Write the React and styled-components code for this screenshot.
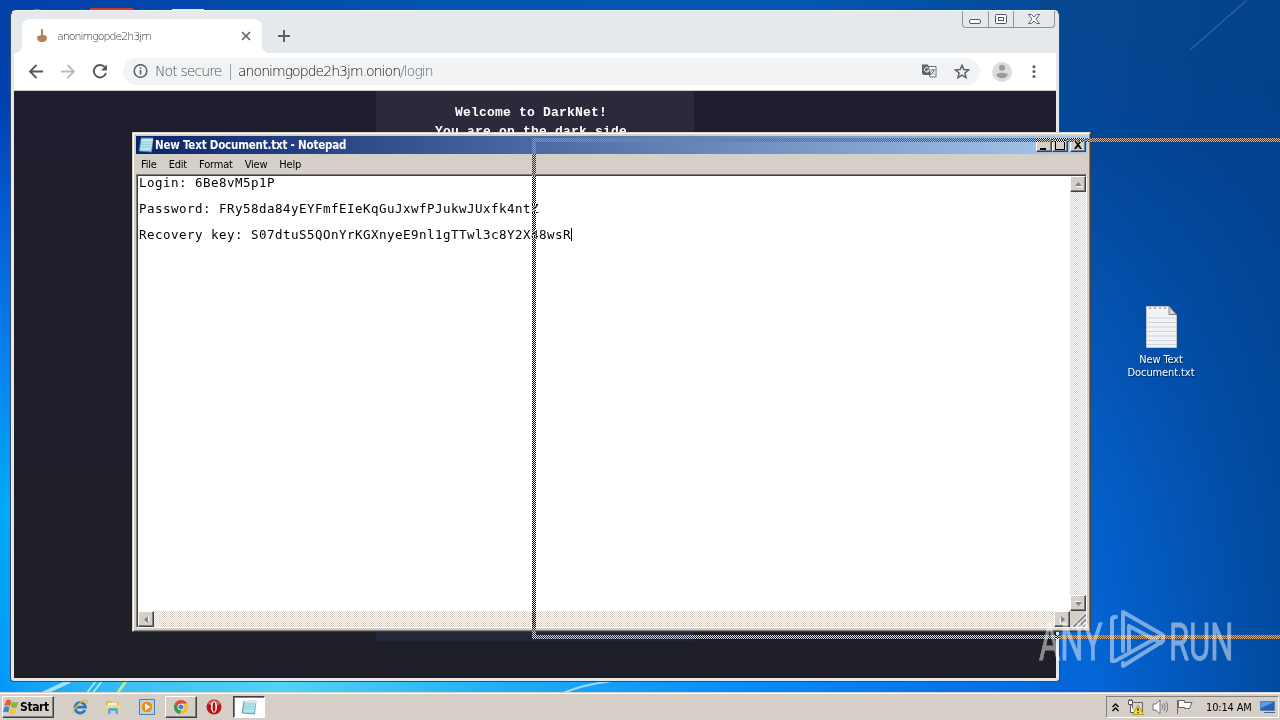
import React from "react";
import styled, { createGlobalStyle, css } from "styled-components";

const GlobalStyle = createGlobalStyle`
* {
    box-sizing: border-box;
}
body {
    margin: 0;
    overflow: hidden;
}
svg {
    display: block;
    flex: none;
}
`;

const uiFont = `"DejaVu Sans Condensed", "DejaVu Sans", sans-serif`;

const raised = css`
    background: #d4d0c8;
    border: 1px solid;
    border-color: #fff #404040 #404040 #fff;
    box-shadow: inset -1px -1px 0 #808080;
`;

const checker = (a, b) => `repeating-conic-gradient(${a} 0 25%, ${b} 0 50%) 0 0 / 2px 2px`;

function Wallpaper() {
    return (
        <WallpaperStyled viewBox="0 0 1280 720" preserveAspectRatio="none">
            <defs>
                <linearGradient id="side" x1="0" y1="0" x2="0" y2="1">
                    <stop offset="0" stopColor="#0341a6" />
                    <stop offset=".14" stopColor="#0240b0" />
                    <stop offset=".32" stopColor="#0560d8" />
                    <stop offset=".52" stopColor="#0586f0" />
                    <stop offset=".7" stopColor="#00a8fa" />
                    <stop offset="1" stopColor="#0498fa" />
                </linearGradient>
                <linearGradient id="top" x1="0" y1="0" x2="1" y2="0">
                    <stop offset="0" stopColor="#0340a8" />
                    <stop offset=".35" stopColor="#0354b2" />
                    <stop offset=".6" stopColor="#0458b4" />
                    <stop offset=".8" stopColor="#044c9c" />
                    <stop offset="1" stopColor="#104a82" />
                </linearGradient>
                <linearGradient id="bottom" x1="0" y1="0" x2="1" y2="0">
                    <stop offset="0" stopColor="#0498fa" />
                    <stop offset=".1" stopColor="#3cc0f4" />
                    <stop offset=".22" stopColor="#50d4f6" />
                    <stop offset=".4" stopColor="#20acf8" />
                    <stop offset=".6" stopColor="#0688fa" />
                    <stop offset=".85" stopColor="#0468dc" />
                    <stop offset="1" stopColor="#034ca6" />
                </linearGradient>
                <linearGradient id="right" x1="0" y1="0" x2="0" y2="1">
                    <stop offset="0" stopColor="#074890" />
                    <stop offset=".2" stopColor="#03479a" />
                    <stop offset=".4" stopColor="#0452b0" />
                    <stop offset=".7" stopColor="#0460cc" />
                    <stop offset="1" stopColor="#0468dc" />
                </linearGradient>
                <linearGradient id="shade" x1="0" y1="0" x2="1" y2="0">
                    <stop offset="0" stopColor="#003c80" stopOpacity="0" />
                    <stop offset="1" stopColor="#003f88" stopOpacity=".7" />
                </linearGradient>
            </defs>
            <rect width="1280" height="720" fill="url(#side)" />
            <rect width="1280" height="30" fill="url(#top)" />
            <rect y="672" width="1280" height="48" fill="url(#bottom)" />
            <rect x="1040" width="240" height="720" fill="url(#right)" />
            <rect x="1090" width="190" height="720" fill="url(#shade)" />
            <path d="M1190 50 1247 0" stroke="#5b93c6" strokeWidth="1.5" opacity=".4" />
            <path d="M42 694 70 681" stroke="#c8f0ff" strokeWidth="4" opacity=".8" />
            <path d="m86 694 10-13m-4 13 10-13" stroke="#b0ecfa" strokeWidth="1.5" />
            <path d="m117 694 9-13" stroke="#b8ec94" strokeWidth="3" />
            <path d="M560 694Q585 684 612 681" stroke="#9edcff" strokeWidth="2" fill="none" />
            <path d="M22 12q16-5 28 0M172 12V9h32v3" fill="#d8e6f4" />
            <rect x="90" y="8" width="43" height="4" fill="#d23a2c" />
        </WallpaperStyled>
    );
}

function Hand() {
    return (
        <svg width="12" height="14" viewBox="0 0 12 14">
            <path d="M5 0h2v6l3 .6 1 1.600-.6 3L8 13H4.200L1.500 11 1 7.500 5 6z" fill="#b87f5b" />
        </svg>
    );
}

function NotepadIcon({ size = 16 }) {
    return (
        <svg width={size} height={size} viewBox="0 0 16 16">
            <path d="M3 2h12l-1.500 13L1 14z" fill="#8fc8d8" stroke="#4f8796" strokeWidth=".7" />
            <path d="M4 2h11l-2 11.500H2.500z" fill="#b4e4ec" />
            <path d="M4 5h9M3.700 7.500h9M3.400 10h9" stroke="#8cc6d2" strokeWidth=".7" />
            <path d="M4 .5v3M6 .5v3M8 .5v3M10 .5v3M12 .5v3M14 .5v3" stroke="#f4fafa" strokeWidth=".9" />
        </svg>
    );
}

function Arrow({ dir }) {
    const turn = { up: 0, right: 90, down: 180, left: 270 }[dir];
    return (
        <svg width="9" height="9" viewBox="0 0 9 9">
            <g transform={`rotate(${turn} 4.500 4.500)`}>
                <path d="M2 7h7L5.500 3z" fill="#fff" />
                <path d="M1 6h7L4.500 2z" fill="#808080" />
            </g>
        </svg>
    );
}

function Browser() {
    return (
        <BrowserStyled>
            <TabStrip>
                <Tab>
                    <Hand />
                    <TabTitle>anonimgopde2h3jm</TabTitle>
                    <svg width="10" height="10" viewBox="0 0 10 10" stroke="#5f6368" strokeWidth="1.700">
                        <path d="m1 1 8 8M9 1 1 9" />
                    </svg>
                </Tab>
                <svg width="12" height="12" viewBox="0 0 12 12" stroke="#5f6368" strokeWidth="2">
                    <path d="M6 0v12M0 6h12" />
                </svg>
                <AeroButtons>
                    <AeroButton $w={25}>
                        <svg width="13" height="14" viewBox="0 0 13 14" fill="#fff" stroke="#4d5570">
                            <rect x=".5" y="7.500" width="11" height="4" rx="1.500" />
                        </svg>
                    </AeroButton>
                    <AeroButton $w={25}>
                        <svg width="12" height="10" viewBox="0 0 12 10" fill="#fff" stroke="#4d5570">
                            <rect x=".5" y=".5" width="11" height="9" rx="1" />
                            <rect x="3.500" y="3.500" width="5" height="3" />
                        </svg>
                    </AeroButton>
                    <AeroButton $w={41}>
                        <svg width="12" height="10" viewBox="0 0 12 10" fill="#fff" stroke="#4d5570" strokeWidth=".9">
                            <path d="M.5.500h3L6 3 8.500.500h3L8 5l3.500 4.500h-3L6 7 3.500 9.500h-3L4 5z" />
                        </svg>
                    </AeroButton>
                </AeroButtons>
            </TabStrip>
            <Toolbar>
                <NavIcons>
                    <svg width="16" height="16" viewBox="0 0 16 16" fill="none" stroke="#54575b" strokeWidth="1.800">
                        <path d="M15 7.500H2M8.500 1 2 7.500 8.500 14" />
                    </svg>
                    <svg width="16" height="16" viewBox="0 0 16 16" fill="none" stroke="#b9bbbe" strokeWidth="1.800">
                        <path d="M1 7.500h13M7.500 1 14 7.500 7.500 14" />
                    </svg>
                    <svg width="16" height="16" viewBox="0 0 16 16" fill="none" stroke="#54575b" strokeWidth="1.900">
                        <path d="M13 3.500A6.200 6.200 0 1 0 14 9" />
                        <path d="M15 .5v6H9z" fill="#54575b" stroke="none" />
                    </svg>
                </NavIcons>
                <Omnibox>
                    <svg width="15" height="15" viewBox="0 0 15 15" fill="none" stroke="#5f6368" strokeWidth="1.600">
                        <circle cx="7.500" cy="7" r="6.300" />
                        <path d="M7.500 6v4.500M7.500 3.500V5" />
                    </svg>
                    <Security>Not secure</Security>
                    <Url>
                        anonimgopde2h3jm.onion<span>/login</span>
                    </Url>
                    <svg width="15" height="15" viewBox="0 0 15 15">
                        <path d="M5.500 2.500H14V13H8z" fill="#fff" stroke="#6b6e72" />
                        <path d="M0 .5h6L9.500 11h-8L0 9.500z" fill="#5f6368" />
                        <path d="M6.500 4.200A2.300 2.300 0 1 0 7 6.300H5" stroke="#fff" fill="none" />
                        <path d="M8.500 6H13M10.800 5v1M12.200 6q-.7 2.500-3 4M9.600 7.500l3 3" stroke="#6b6e72" fill="none" />
                    </svg>
                    <svg width="16" height="16" viewBox="0 0 16 16" fill="none" stroke="#5f6368" strokeWidth="1.500">
                        <path d="m8 1.300 1.800 4.300 4.700.4-3.600 3 1.100 4.600L8 11.100l-4 2.500L5.100 9 1.500 6l4.700-.4z" />
                    </svg>
                </Omnibox>
                <svg width="20" height="20" viewBox="0 0 20 20">
                    <circle cx="10" cy="10" r="10" fill="#dcdcdc" />
                    <circle cx="10" cy="5.800" r="3" fill="#9c9c9e" />
                    <path d="M4.300 13.500q0-2.800 5.700-2.800t5.700 2.800q-2 2.800-5.700 2.800t-5.700-2.800" fill="#9c9c9e" />
                </svg>
                <svg width="4" height="14" viewBox="0 0 4 14" fill="#5f6368">
                    <circle cx="2" cy="1.800" r="1.600" />
                    <circle cx="2" cy="6.500" r="1.600" />
                    <circle cx="2" cy="11.500" r="1.600" />
                </svg>
            </Toolbar>
            <Page>
                <LoginPanel>
                    <p>Welcome to DarkNet!&nbsp;</p>
                    <p>You are on the dark side.</p>
                </LoginPanel>
            </Page>
        </BrowserStyled>
    );
}

const menus = ["File", "Edit", "Format", "View", "Help"];

const note = `Login: 6Be8vM5p1P

Password: FRy58da84yEYFmfEIeKqGuJxwfPJukwJUxfk4ntZ

Recovery key: S07dtuS5QOnYrKGXnyeE9nl1gTTwl3c8Y2X48wsR`;

function Notepad() {
    return (
        <NotepadStyled>
            <TitleBar>
                <NotepadIcon />
                <h1>New Text Document.txt - Notepad</h1>
                <CaptionButton>
                    <path d="M3 9h6v2H3z" />
                </CaptionButton>
                <CaptionButton>
                    <path d="M2 1h10v10H2zM3 3v7h8V3z" fillRule="evenodd" />
                </CaptionButton>
                <CaptionButton $gap>
                    <path d="M3 2h2l2 2.500L9 2h2L8 5.500 11 10H9L7 7.500 5 10H3l3-4.500z" />
                </CaptionButton>
            </TitleBar>
            <MenuBar>
                {menus.map((name) => (
                    <span key={name}>{name}</span>
                ))}
            </MenuBar>
            <Editor>
                <NoteText>
                    {note}
                    <Caret />
                </NoteText>
                <ScrollBar $vertical>
                    <ScrollButton><Arrow dir="up" /></ScrollButton>
                    <ScrollButton><Arrow dir="down" /></ScrollButton>
                </ScrollBar>
                <ScrollBar>
                    <ScrollButton><Arrow dir="left" /></ScrollButton>
                    <ScrollButton><Arrow dir="right" /></ScrollButton>
                </ScrollBar>
                <svg width="16" height="16" viewBox="0 0 16 16">
                    <path d="M3 16 16 3M8 16l8-8M13 16l3-3" stroke="#808080" strokeWidth="2" />
                    <path d="M1.500 16 16 1.500M6.500 16 16 6.500M11.500 16l4.500-4.500" stroke="#fff" />
                </svg>
            </Editor>
        </NotepadStyled>
    );
}

function CaptionButton({ children, $gap }) {
    return (
        <CaptionButtonStyled $gap={$gap}>
            <svg width="14" height="12" viewBox="0 0 14 12">{children}</svg>
        </CaptionButtonStyled>
    );
}

function Watermark() {
    return (
        <WatermarkStyled viewBox="0 0 206 80">
            <text transform="translate(2 51) scale(.64 1)">ANY</text>
            <text transform="translate(132 51) scale(.64 1)">RUN</text>
            <g fill="none" stroke="#fff" strokeWidth="4" strokeLinejoin="round" strokeLinecap="round">
                <path d="M79 8h-1q-3 0-3 3v41h3l43-24" />
                <path d="M86 42V3l40 23v6L86 57v-3" />
                <path d="M92 17v26M92 17l32 17" />
            </g>
        </WatermarkStyled>
    );
}

function Taskbar() {
    return (
        <TaskbarStyled>
            <StartButton>
                <svg width="16" height="16" viewBox="0 0 16 16">
                    <path d="M3.500 1Q6 0 8.300 2L7 7.500Q4.500 5.500 1.500 7z" fill="#ea5b2b" />
                    <path d="M9 2.500q2.500 1.500 6.500.5L13.700 8.500q-3 1-6-.5z" fill="#7fba3a" />
                    <path d="M1.500 8q2.500-1.500 5 .5L5.200 13.500Q3 12 0 13.300z" fill="#3d86d6" />
                    <path d="M7.500 9q2.500 1.500 5.700.5L11.800 15q-3 1-5.700-.8z" fill="#f8c52c" />
                </svg>
                Start
            </StartButton>
            <Launch>
                <svg width="16" height="16" viewBox="0 0 16 16" fill="none">
                    <path d="M13 11A5.300 5.300 0 1 1 13.500 8.200H4" stroke="#2678c8" strokeWidth="2.800" />
                    <path d="M2 14.500C-1 11 11-.5 15 1.500q1.200 1-.5 3.500" stroke="#e9bd38" strokeWidth="1.400" />
                </svg>
            </Launch>
            <Launch>
                <svg width="16" height="16" viewBox="0 0 16 16">
                    <path d="M1 2h5l1 1.500h7V13H1z" fill="#dcbc58" />
                    <path d="M3 4h9v4H3z" fill="#f9f6dc" />
                    <path d="M1 6h14l-.5 7H1.500z" fill="#f3d983" />
                    <path d="M3 15v-4.500Q3 9 5 9h6q2 0 2 1.500V15h-2.500v-3h-5v3z" fill="#5aa8d8" />
                </svg>
            </Launch>
            <Launch>
                <svg width="16" height="16" viewBox="0 0 16 16">
                    <path d="M.5.500h15v15H.500z" fill="#a9d0ee" stroke="#3d83c0" />
                    <circle cx="8" cy="8" r="6" fill="#f28a1e" stroke="#fff2d8" strokeWidth=".7" />
                    <path d="m6 4.500 5.500 3.500L6 11.500z" fill="#fff" />
                </svg>
            </Launch>
            <TaskButton>
                <svg width="16" height="16" viewBox="0 0 16 16">
                    <circle cx="8" cy="8" r="7" fill="#f2bd2c" />
                    <path d="M1.900 4.500a7 7 0 0 1 12.200 0H8L5 9.700z" fill="#db4a3b" />
                    <path d="M1.900 4.500 5 9.700l3 1.800L6.800 15A7 7 0 0 1 1.900 4.500" fill="#2f9e55" />
                    <circle cx="8" cy="8" r="3.300" fill="#f5f5f5" />
                    <circle cx="8" cy="8" r="2.500" fill="#3f7fe0" />
                </svg>
            </TaskButton>
            <Launch>
                <svg width="16" height="16" viewBox="0 0 16 16">
                    <circle cx="8" cy="8" r="7.500" fill="#b8151b" />
                    <path d="M2 5a6.700 6.700 0 0 1 12 0q-6 3-12 0" fill="#dd6663" />
                    <ellipse cx="8" cy="8" rx="3" ry="5.700" fill="#fff" />
                    <ellipse cx="8" cy="8" rx="1.400" ry="4.700" fill="#a51116" />
                </svg>
            </Launch>
            <TaskButton $active>
                <NotepadIcon />
            </TaskButton>
            <Tray>
                <svg width="7" height="9" viewBox="0 0 7 9" fill="none" stroke="#000" strokeWidth="1.400">
                    <path d="m.5 4 3-3 3 3M.5 8l3-3 3 3" />
                </svg>
                <svg width="17" height="16" viewBox="0 0 17 16">
                    <path d="M5.500 3.500H15.500v9H5.500z" fill="#d8d4cc" stroke="#666" />
                    <path d="M1.500 1.500h4v4h-4zM3.500 5.500v8h4M2.500 0v2M4.500 0v2" fill="#fff" stroke="#555" />
                    <path d="M11 6 16.500 15.500H5.500z" fill="#f7dc28" stroke="#a18a10" strokeWidth=".7" />
                    <path d="M11 9v3M11 13v1.300" stroke="#222" strokeWidth="1.300" />
                </svg>
                <svg width="17" height="16" viewBox="0 0 17 16" fill="none" stroke="#777">
                    <path d="M1 5h3l4-4v14l-4-4H1z" fill="#fff" />
                    <path d="M10 5.500q1.500 2.500 0 5M12 4q2.500 4 0 8M14 2.500q3.500 5.500 0 11" />
                </svg>
                <svg width="16" height="16" viewBox="0 0 16 16" fill="#fff" stroke="#666">
                    <path d="M.5 1v14" />
                    <path d="M1.500 1.500h6V3.500H15L12.500 9.500H7.500V8.500h-6z" />
                </svg>
                <Clock>10:14 AM</Clock>
                <svg width="16" height="14" viewBox="0 0 16 14">
                    <path d="M.5 1.500h14v9H.500z" fill="#2862b5" stroke="#5c80ac" />
                    <path d="M1 2h13L1 8z" fill="#5f9be0" />
                    <path d="M4 12.500h11" stroke="#4c6481" />
                </svg>
            </Tray>
        </TaskbarStyled>
    );
}

function App() {
    return (
        <Desktop>
            <GlobalStyle />
            <Wallpaper />
            <Browser />
            <Shortcut>
                <svg width="34" height="44" viewBox="0 0 34 44">
                    <path d="M2.500 1.500H25l7.500 9V42.500h-30z" fill="#f2f3f5" stroke="#bcc5ce" />
                    <path d="M3 13h29M3 17.500h29M3 22h29M3 26.500h29M3 31h29M3 35.500h29M3 39.500h29" stroke="#ced4e0" />
                    <path d="M25 1.500v8h7.500z" fill="#d2d6dc" stroke="#8c7c80" />
                    <path d="M5 3h18" stroke="#98a0aa" strokeWidth="1.500" strokeDasharray="2 3" />
                </svg>
                <span>New Text Document.txt</span>
            </Shortcut>
            <Notepad />
            <DragOutline />
            <DragTail $x={1091} $y={138} $light="#cfb598" $dark="#3a4450" />
            <DragTail $x={1060} $y={635} $light="#dcae80" $dark="#504c4c" />
            <Taskbar />
            <Watermark />
        </Desktop>
    );
}

const Desktop = styled.main`
position: relative;
display: flex;
flex-direction: column;
justify-content: flex-end;
width: 1280px;
height: 720px;
overflow: hidden;
isolation: isolate;
font-family: ${uiFont};
font-size: 11px;
`;

const WallpaperStyled = styled.svg`
position: absolute;
inset: 0;
width: 100%;
height: 100%;
`;

const BrowserStyled = styled.section`
position: absolute;
left: 10px;
top: 10px;
width: 1050px;
height: 672px;
display: flex;
flex-direction: column;
padding: 0 3px 3px;
background: #e6e9ec;
border: 1px solid #3a4a66;
border-top-color: #f4f6f8;
border-radius: 6px 6px 4px 4px;
`;

const TabStrip = styled.div`
display: flex;
align-items: center;
height: 42px;
padding: 8px 0 0 8px;
& > svg {
    margin-left: 16px;
}
`;

const Tab = styled.div`
display: flex;
align-items: center;
position: relative;
width: 240px;
height: 34px;
padding: 0 11px 0 14px;
background: #fff;
border-radius: 8px 8px 0 0;
&::before,
&::after {
    content: "";
    position: absolute;
    bottom: 0;
    width: 8px;
    height: 8px;
    background: radial-gradient(circle at 0 0, transparent 8px, #fff 8px);
}
&::before {
    left: -8px;
}
&::after {
    right: -8px;
    background: radial-gradient(circle at 100% 0, transparent 8px, #fff 8px);
}
`;

const TabTitle = styled.span`
flex: 1;
margin-left: 9px;
font-family: "DejaVu Sans", sans-serif;
font-weight: 200;
font-size: 11px;
letter-spacing: -1px;
color: #303438;
`;

const AeroButtons = styled.div`
display: flex;
align-self: flex-start;
height: 17px;
margin: -8px 1px 0 auto;
border: 1px solid #8e929c;
border-top: 0;
border-radius: 0 0 4px 4px;
`;

const AeroButton = styled.div`
display: flex;
align-items: center;
justify-content: center;
width: ${({ $w }) => $w}px;
& + & {
    border-left: 1px solid #8e929c;
}
`;

const Toolbar = styled.div`
display: flex;
align-items: center;
flex: none;
height: 38px;
padding: 0 20px 0 14px;
background: #fff;
border-bottom: 1px solid #c8cacc;
& > svg {
    margin-left: 12px;
}
& > svg + svg {
    margin-left: 20px;
}
`;

const NavIcons = styled.div`
display: flex;
gap: 16px;
`;

const Omnibox = styled.div`
display: flex;
align-items: center;
flex: 1;
height: 27px;
margin-left: 15px;
padding: 0 10px;
border-radius: 14px;
background: #f1f3f4;
font-family: "DejaVu Sans", sans-serif;
font-weight: 200;
font-size: 14px;
& > svg + svg {
    margin-left: 17px;
}
`;

const Security = styled.span`
margin-left: 7px;
width: 76px;
height: 16px;
line-height: 14px;
border-right: 1px solid #9a9da1;
letter-spacing: -.9px;
color: #4c5054;
white-space: nowrap;
`;

const Url = styled.span`
flex: 1;
height: 16px;
line-height: 14px;
margin-left: 7px;
letter-spacing: -.96px;
color: #101114;
span {
    color: #606468;
}
`;

const Page = styled.div`
flex: 1;
display: flex;
justify-content: center;
align-items: flex-start;
background: linear-gradient(#1e1e2f, #1f1f27);
`;

const LoginPanel = styled.div`
width: 318px;
height: 550px;
padding: 12px 0;
background: linear-gradient(#2a2a3b, #26263a);
font-family: "Liberation Mono", monospace;
font-weight: 700;
font-size: 13px;
line-height: 19px;
letter-spacing: .2px;
text-align: center;
color: #fff;
p {
    margin: 0;
}
`;

const NotepadStyled = styled.section`
position: absolute;
left: 132px;
top: 132px;
width: 959px;
height: 500px;
display: flex;
flex-direction: column;
padding: 3px;
background: #d6cfc8;
border: 1px solid;
border-color: #d4d0c8 #404040 #404040 #d4d0c8;
box-shadow: inset 1px 1px 0 #fff, inset -1px -1px 0 #808080;
`;

const TitleBar = styled.header`
display: flex;
align-items: center;
flex: none;
height: 18px;
padding: 0 1px 0 2px;
background: linear-gradient(90deg, #0a246a, #a6caf0);
h1 {
    flex: 1;
    margin: 0 0 0 1px;
    font-size: 11.500px;
    font-weight: 700;
    letter-spacing: -.2px;
    color: #fff;
}
`;

const CaptionButtonStyled = styled.div`
${raised}
width: 16px;
height: 14px;
margin-left: ${({ $gap }) => ($gap ? 2 : 0)}px;
`;

const MenuBar = styled.nav`
display: flex;
gap: 12px;
height: 20px;
padding: 0 5px;
line-height: 21px;
letter-spacing: -.2px;
color: #000;
`;

const Editor = styled.div`
flex: 1;
display: grid;
grid-template: 1fr 16px / 1fr 16px;
min-height: 0;
border: 1px solid;
border-color: #808080 #fff #fff #808080;
box-shadow: inset 1px 1px 0 #404040;
padding: 1px 0 0 1px;
`;

const NoteText = styled.div`
padding-left: 1px;
background: #fff;
font-family: "DejaVu Sans Mono", monospace;
font-size: 12.500px;
line-height: 13px;
letter-spacing: .475px;
white-space: pre;
color: #000;
`;

const Caret = styled.i`
display: inline-block;
width: 1px;
height: 13px;
vertical-align: top;
background: #000;
`;

const ScrollBar = styled.div`
background: ${checker("#d8cfc6", "#fff")};
display: flex;
flex-direction: ${({ $vertical }) => ($vertical ? "column" : "row")};
justify-content: space-between;
`;

const ScrollButton = styled.div`
${raised}
display: flex;
align-items: center;
justify-content: center;
width: 16px;
height: 16px;
`;

/* dithered frame that inverts whatever is under it */
const DragOutline = styled.div`
position: absolute;
left: 532px;
top: 138px;
width: 559px;
height: 501px;
background: ${checker("#fff", "transparent")};
mix-blend-mode: difference;
clip-path: polygon(0 0, 100% 0, 100% 4px, 4px 4px, 4px 497px, 528px 497px, 528px 100%, 0 100%);
`;

/* the part of the frame that runs over the bare desktop */
const DragTail = styled.div`
position: absolute;
left: ${({ $x }) => $x}px;
right: 0;
top: ${({ $y }) => $y}px;
height: 4px;
background: ${({ $light, $dark }) => checker($light, $dark)};
`;

const Shortcut = styled.div`
position: absolute;
left: 1121px;
top: 305px;
width: 80px;
display: flex;
flex-direction: column;
align-items: center;
gap: 4px;
line-height: 13px;
letter-spacing: -.1px;
text-align: center;
color: #fff;
text-shadow: 1px 1px 1px #00285a;
span {
    width: 72px;
}
`;

const TaskbarStyled = styled.footer`
position: relative;
display: flex;
align-items: center;
height: 28px;
padding: 1px 1px 0 2px;
background: #d6cfc8;
border-top: 1px solid #d4d0c8;
box-shadow: inset 0 1px 0 #fff;
`;

const StartButton = styled.div`
${raised}
display: flex;
align-items: center;
gap: 1px;
width: 52px;
height: 22px;
margin-right: 9px;
padding: 0 0 1px;
font-size: 12px;
font-weight: 700;
letter-spacing: -.4px;
`;

const Launch = styled.div`
display: flex;
justify-content: center;
width: 33.500px;
`;

const TaskButton = styled.div`
${raised}
display: flex;
align-items: center;
justify-content: center;
width: 32px;
height: 22px;
margin: 0 1px;
${({ $active }) => $active && css`
    margin-left: 2px;
    background: #fff;
    border-color: #404040 #fff #fff #404040;
    box-shadow: inset 1px 1px 0 #808080;
`}
`;

const Tray = styled.div`
display: flex;
align-items: center;
width: 173px;
height: 22px;
margin-left: auto;
padding: 0 2px 0 5px;
border: 1px solid;
border-color: #808080 #fff #fff #808080;
gap: 8px;
`;

const Clock = styled.span`
flex: 1;
padding-left: 5px;
letter-spacing: -.15px;
white-space: nowrap;
`;

const WatermarkStyled = styled.svg`
position: absolute;
left: 1037px;
top: 609px;
width: 206px;
height: 80px;
opacity: .48;
text {
    font: 400 51px Roboto, sans-serif;
    fill: #fff;
    stroke: #fff;
    stroke-width: .8px;
}
`;

export default App;
